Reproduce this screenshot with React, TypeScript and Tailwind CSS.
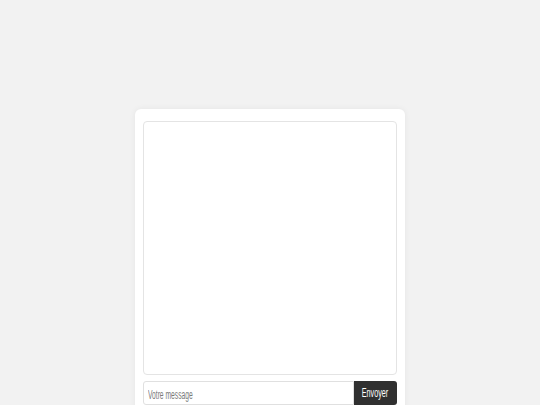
export default function App() {
  return (
    <div className="min-h-screen bg-[#f2f2f2] flex justify-center pt-[109px] font-['Liberation_Sans',Arial,sans-serif]">
      <div className="w-[270px] bg-white rounded-[6px] shadow-[0_0_6px_rgba(0,0,0,0.06)] px-[8px] pt-[12px] pb-[12px] flex flex-col gap-[6px] h-fit">
        <div className="h-[254px] border border-[#e4e4e4] rounded-[4px] bg-white" />
        <div className="flex h-[24px]">
          <div className="flex-1 min-w-0 border border-[#e0e0e0] rounded-l-[3px] overflow-hidden">
            <input
              type="text"
              placeholder="Votre message"
              className="w-[180%] h-full origin-left scale-x-[0.56] px-[7px] pb-[1px] text-[12px] text-[#333] placeholder:text-[#7a7a7a] outline-none bg-transparent"
            />
          </div>
          <button className="w-[43px] bg-[#303030] text-white text-[12px] rounded-r-[3px] flex items-center justify-center">
            <span className="inline-block scale-x-[0.6]">Envoyer</span>
          </button>
        </div>
      </div>
    </div>
  );
}
